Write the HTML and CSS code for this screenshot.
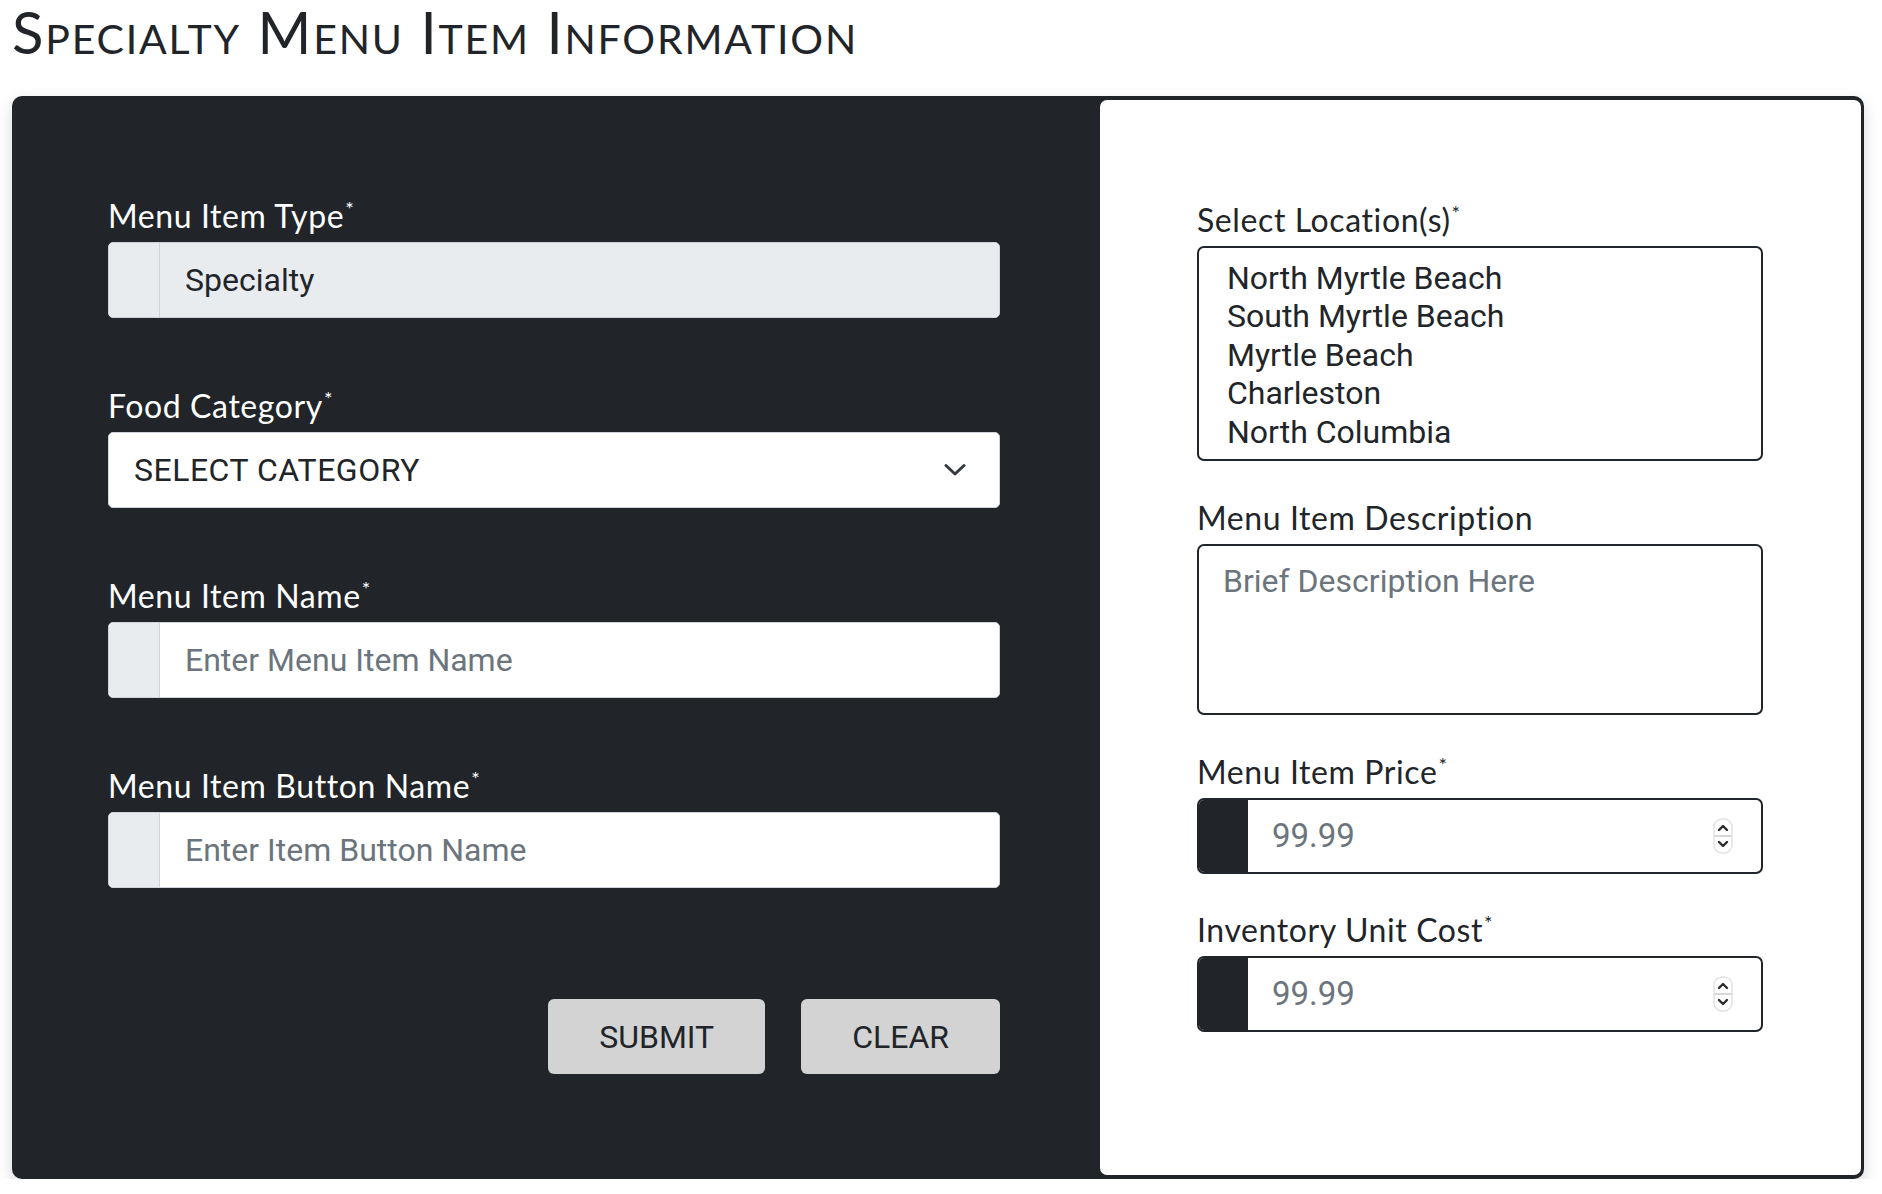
FILE: index.html
```html
<!DOCTYPE html>
<html lang="en">
<head>
<meta charset="utf-8">
<title>Specialty Menu Item Information</title>
<link rel="stylesheet" href="styles.css">
</head>
<body>
<div class="page">
  <h1 class="title">Specialty Menu Item Information</h1>
  <form class="card">
    <div class="col-left">
      <div class="field f1">
        <label class="lbl">Menu Item Type<sup>*</sup></label>
        <div class="group light readonly">
          <span class="addon"></span>
          <span class="value">Specialty</span>
        </div>
      </div>
      <div class="field f2">
        <label class="lbl">Food Category<sup>*</sup></label>
        <div class="select">
          <span class="value caps">SELECT CATEGORY</span>
          <svg class="chev" width="22" height="14" viewBox="0 0 22 14"><path d="M2 2.5 L11 11 L20 2.5" fill="none" stroke="#343a40" stroke-width="3" stroke-linecap="round" stroke-linejoin="round"/></svg>
        </div>
      </div>
      <div class="field f3">
        <label class="lbl">Menu Item Name<sup>*</sup></label>
        <div class="group light">
          <span class="addon"></span>
          <span class="value ph">Enter Menu Item Name</span>
        </div>
      </div>
      <div class="field f4">
        <label class="lbl">Menu Item Button Name<sup>*</sup></label>
        <div class="group light">
          <span class="addon"></span>
          <span class="value ph">Enter Item Button Name</span>
        </div>
      </div>
      <div class="actions">
        <button type="button" class="btn">SUBMIT</button>
        <button type="button" class="btn">CLEAR</button>
      </div>
    </div>
    <div class="col-right">
      <div class="field r1">
        <label class="lbl">Select Location(s)<sup>*</sup></label>
        <div class="listbox">
          <div class="opt">North Myrtle Beach</div>
          <div class="opt">South Myrtle Beach</div>
          <div class="opt">Myrtle Beach</div>
          <div class="opt">Charleston</div>
          <div class="opt">North Columbia</div>
        </div>
      </div>
      <div class="field r2">
        <label class="lbl">Menu Item Description</label>
        <div class="textarea"><span class="ph">Brief Description Here</span></div>
      </div>
      <div class="field r3">
        <label class="lbl">Menu Item Price<sup>*</sup></label>
        <div class="group dark">
          <span class="addon"></span>
          <span class="value ph num">99.99</span>
          <span class="spin"><svg width="20" height="36" viewBox="0 0 20 36"><rect x="1" y="1" width="18" height="34" rx="8" fill="#fff" stroke="#e2e2e2" stroke-width="1.5"/><line x1="1.5" y1="18" x2="18.5" y2="18" stroke="#d8d8d8" stroke-width="2"/><path d="M6 12 L10 8 L14 12" fill="none" stroke="#2b2b2b" stroke-width="2.4" stroke-linecap="round" stroke-linejoin="round"/><path d="M6 24 L10 28 L14 24" fill="none" stroke="#2b2b2b" stroke-width="2.4" stroke-linecap="round" stroke-linejoin="round"/></svg></span>
        </div>
      </div>
      <div class="field r4">
        <label class="lbl">Inventory Unit Cost<sup>*</sup></label>
        <div class="group dark">
          <span class="addon"></span>
          <span class="value ph num">99.99</span>
          <span class="spin"><svg width="20" height="36" viewBox="0 0 20 36"><rect x="1" y="1" width="18" height="34" rx="8" fill="#fff" stroke="#e2e2e2" stroke-width="1.5"/><line x1="1.5" y1="18" x2="18.5" y2="18" stroke="#d8d8d8" stroke-width="2"/><path d="M6 12 L10 8 L14 12" fill="none" stroke="#2b2b2b" stroke-width="2.4" stroke-linecap="round" stroke-linejoin="round"/><path d="M6 24 L10 28 L14 24" fill="none" stroke="#2b2b2b" stroke-width="2.4" stroke-linecap="round" stroke-linejoin="round"/></svg></span>
        </div>
      </div>
    </div>
  </form>
</div>
</body>
</html>
```

FILE: styles.css
```css
* { box-sizing: border-box; }

body {
  margin: 0;
  background: #ffffff;
  font-family: "Lato", "Open Sans", sans-serif;
  color: #212529;
}

.page {
  padding: 0 18px 0 12px;
}

.title {
  margin: 0 0 33px 0;
  font-family: "Lato", sans-serif;
  font-weight: 400;
  font-size: 58px;
  line-height: 63px;
  letter-spacing: 1.8px;
  font-variant: small-caps;
  color: #212529;
  white-space: nowrap;
}

.card {
  display: flex;
  background: #212529;
  border-radius: 10px;
  box-shadow: 0 6px 16px rgba(0, 0, 0, 0.16);
  margin: 0;
}

.col-left {
  width: 1088px;
  flex: none;
  padding: 101px 100px 105px 96px;
}

.col-right {
  flex: 1;
  background: #ffffff;
  margin: 4px 3px 4px 0;
  border-radius: 7px;
  padding: 101px 98px 40px 97px;
}

.lbl {
  display: block;
  font-family: "Lato", sans-serif;
  font-weight: 400;
  font-size: 32px;
  line-height: 38px;
  letter-spacing: 0.6px;
  margin-bottom: 7px;
  color: #ffffff;
  white-space: nowrap;
}

.col-right .lbl { color: #212529; }

.lbl sup {
  font-size: 20px;
  vertical-align: 12px;
  line-height: 0;
  margin-left: 1px;
}

.f1, .f2, .f3 { margin-bottom: 69px; }

.group, .select, .listbox, .textarea {
  font-family: "Roboto", "Liberation Sans", sans-serif;
  font-size: 32px;
}

.group {
  display: flex;
  align-items: center;
  height: 76px;
  border-radius: 5px;
  overflow: hidden;
}

.group .addon {
  width: 51px;
  flex: none;
  align-self: stretch;
}

.group .value {
  flex: 1;
  padding-left: 25px;
  line-height: 48px;
}

.group.light {
  background: #ffffff;
  border: 1px solid #ced4da;
}

.group.light .addon {
  background: #e9ecef;
  border-right: 1px solid #ced4da;
}

.group.readonly { background: #e9ecef; }

.value { color: #212529; }

.ph { color: #6c757d; }

.num { font-size: 33px; }

.select {
  display: flex;
  align-items: center;
  justify-content: space-between;
  height: 76px;
  background: #ffffff;
  border: 1px solid #ced4da;
  border-radius: 5px;
  padding: 0 33px 0 25px;
}

.select .caps {
  padding-left: 0;
  line-height: 48px;
  letter-spacing: 0.5px;
}

.chev { display: block; }

.actions {
  display: flex;
  justify-content: flex-end;
  gap: 36px;
  margin-top: 111px;
}

.btn {
  height: 75px;
  padding: 0 51px;
  border: none;
  border-radius: 6px;
  background: #d3d3d3;
  color: #212529;
  font-family: "Roboto", "Liberation Sans", sans-serif;
  font-size: 32px;
}

.listbox {
  height: 215px;
  border: 2px solid #212529;
  border-radius: 7px;
  padding: 11px 20px 8px 28px;
}

.opt {
  line-height: 38.4px;
  color: #212529;
}

.r1, .r2 { margin-bottom: 38px; }
.r3 { margin-bottom: 37px; }

.textarea {
  height: 171px;
  border: 2px solid #212529;
  border-radius: 7px;
  padding: 11px 24px;
  line-height: 48px;
}

.group.dark {
  border: 2px solid #212529;
  border-radius: 7px;
  background: #ffffff;
}

.group.dark .addon {
  width: 49px;
  background: #212529;
}

.group.dark .value { padding-left: 24px; }

.spin {
  flex: none;
  display: flex;
  margin-right: 28px;
}
```
